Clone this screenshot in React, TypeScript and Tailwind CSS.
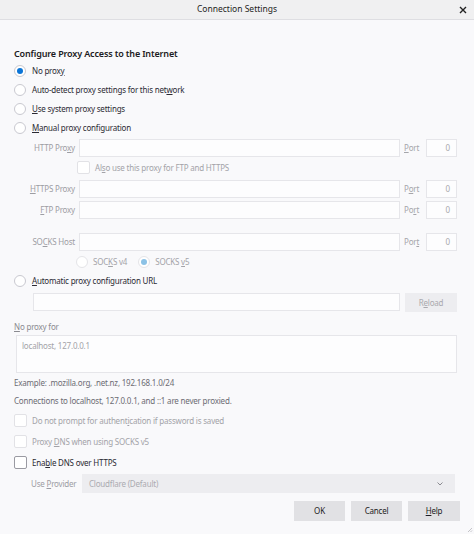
import type { ReactNode } from 'react';

const font = { fontFamily: '"Noto Sans", "Open Sans", sans-serif' };

function K({ children }: { children: ReactNode }) {
  return <span className="underline underline-offset-[1px]">{children}</span>;
}

function Radio({ checked = false, disabled = false }: { checked?: boolean; disabled?: boolean }) {
  return (
    <span
      className={`flex h-[12px] w-[12px] shrink-0 items-center justify-center rounded-full border bg-white ${
        disabled ? 'border-[#e4e4e8]' : 'border-[#c9c9d0]'
      }`}
    >
      {checked && (
        <span className={`h-[6px] w-[6px] rounded-full ${disabled ? 'bg-[#8cc2e6]' : 'bg-[#0a74d6]'}`} />
      )}
    </span>
  );
}

function Check({ disabled = false }: { disabled?: boolean }) {
  return (
    <span
      className={`h-[13px] w-[13px] shrink-0 rounded-[2px] border bg-white ${
        disabled ? 'border-[#e2e2e6]' : 'border-[#9a9aa2]'
      }`}
    />
  );
}

function Field({ className = '' }: { className?: string }) {
  return <div className={`h-[18px] border border-[#e6e6ea] bg-[#fdfdfe] ${className}`} />;
}

function ProxyRow({ label, port, mt }: { label: ReactNode; port: ReactNode; mt: string }) {
  return (
    <div className={`flex h-[18px] items-center ${mt}`}>
      <div className="w-[62px] pr-[1px] text-right text-[#9d9da3]">{label}</div>
      <Field className="ml-[3px] flex-1" />
      <div className="ml-[4px] w-[18px] text-[#a5a5aa]">{port}</div>
      <div className="ml-[4px] flex h-[18px] w-[31px] items-center justify-end border border-[#e6e6ea] bg-[#fdfdfe] pr-[6px] text-[#a8a8ad]">
        0
      </div>
    </div>
  );
}

export default function App() {
  return (
    <div
      className="relative flex h-[534px] w-[474px] flex-col bg-[#f9f9fb] text-[8px] leading-none tracking-[-0.2px] text-[#2b2a33]"
      style={font}
    >
      <div className="relative flex h-[20px] shrink-0 items-center justify-center border-b border-[#dedee2] bg-[#f0f0f1] text-[8.5px] tracking-normal text-[#1e1e22]">
        Connection Settings
        <svg className="absolute right-[7px] top-[6px]" width="8" height="8" viewBox="0 0 8 8">
          <path d="M1 1L7 7M7 1L1 7" stroke="#222" strokeWidth="1.4" />
        </svg>
      </div>

      <div className="flex flex-col pl-[14px] pr-[17px]">
        <div className="mt-[25px] flex h-[16px] items-center text-[9px] font-semibold tracking-[-0.15px] text-[#1c1b22]">
          Configure Proxy Access to the Internet
        </div>

        <div className="flex h-[19px] items-center gap-[6px]">
          <Radio checked />
          <span>
            No prox<K>y</K>
          </span>
        </div>
        <div className="flex h-[19px] items-center gap-[6px]">
          <Radio />
          <span>
            Auto-detect proxy settings for this net<K>w</K>ork
          </span>
        </div>
        <div className="flex h-[19px] items-center gap-[6px]">
          <Radio />
          <span>
            <K>U</K>se system proxy settings
          </span>
        </div>
        <div className="flex h-[20px] items-center gap-[6px]">
          <Radio />
          <span>
            <K>M</K>anual proxy configuration
          </span>
        </div>

        <ProxyRow
          mt="mt-[1px]"
          label={
            <>
              HTTP Pro<K>x</K>y
            </>
          }
          port={
            <>
              <K>P</K>ort
            </>
          }
        />
        <div className="flex h-[21px] items-center gap-[5px] pl-[63px] text-[#a3a3a8]">
          <Check disabled />
          <span>
            Al<K>s</K>o use this proxy for FTP and HTTPS
          </span>
        </div>
        <ProxyRow
          mt="mt-[2px]"
          label={
            <>
              <K>H</K>TTPS Proxy
            </>
          }
          port={
            <>
              P<K>o</K>rt
            </>
          }
        />
        <ProxyRow
          mt="mt-[3px]"
          label={
            <>
              <K>F</K>TP Proxy
            </>
          }
          port={
            <>
              Po<K>r</K>t
            </>
          }
        />
        <ProxyRow
          mt="mt-[14px]"
          label={
            <>
              SO<K>C</K>KS Host
            </>
          }
          port={
            <>
              Por<K>t</K>
            </>
          }
        />

        <div className="flex h-[21px] items-center pl-[62px] text-[#a3a3a8]">
          <Radio disabled />
          <span className="ml-[5px]">
            SOC<K>K</K>S v4
          </span>
          <span className="ml-[11px]">
            <Radio checked disabled />
          </span>
          <span className="ml-[5px]">
            SOCKS <K>v</K>5
          </span>
        </div>

        <div className="flex h-[18px] items-center gap-[6px]">
          <Radio />
          <span>
            <K>A</K>utomatic proxy configuration URL
          </span>
        </div>
        <div className="mt-[3px] flex items-start pl-[19px]">
          <Field className="flex-1" />
          <div className="ml-[5px] flex h-[19px] w-[52px] items-center justify-center bg-[#ededf0] text-[#a9a9ae]">
            R<K>e</K>load
          </div>
        </div>

        <div className="mt-[8px] flex h-[14px] items-center text-[#8a8a90]">
          <span>
            <K>N</K>o proxy for
          </span>
        </div>
        <div className="ml-[2px] mt-[1px] h-[38px] border border-[#e6e6ea] bg-[#fdfdfe] pl-[5px] pt-[6px] text-[#a3a3a8]">
          localhost, 127.0.0.1
        </div>

        <div className="mt-[3px] flex h-[14px] items-center text-[#6c6c73]">
          Example: .mozilla.org, .net.nz, 192.168.1.0/24
        </div>
        <div className="mt-[4px] flex h-[14px] items-center text-[#6c6c73]">
          Connections to localhost, 127.0.0.1, and ::1 are never proxied.
        </div>

        <div className="mt-[2px] flex h-[21px] items-center gap-[5px] text-[#a3a3a8]">
          <Check disabled />
          <span>
            Do not prompt for authent<K>i</K>cation if password is saved
          </span>
        </div>
        <div className="flex h-[21px] items-center gap-[5px] text-[#a3a3a8]">
          <Check disabled />
          <span>
            Proxy <K>D</K>NS when using SOCKS v5
          </span>
        </div>
        <div className="flex h-[21px] items-center gap-[5px]">
          <Check />
          <span>
            Ena<K>b</K>le DNS over HTTPS
          </span>
        </div>

        <div className="mt-[1px] flex h-[19px] items-center pl-[17px]">
          <span className="w-[51px] text-[#9d9da3]">
            Use <K>P</K>rovider
          </span>
          <div className="mr-[2px] flex h-[19px] flex-1 items-center justify-between bg-[#ededf0] pl-[7px] pr-[12px] text-[#ababb0]">
            <span>Cloudflare (Default)</span>
            <svg width="6" height="4" viewBox="0 0 6 4">
              <path d="M0.5 0.5L3 3L5.5 0.5" fill="none" stroke="#8a8a90" strokeWidth="1" />
            </svg>
          </div>
        </div>

        <div className="-mr-[3px] mt-[8px] flex justify-end gap-[6px] text-[#1c1b22]">
          <div className="flex h-[20px] w-[51px] items-center justify-center bg-[#e1e1e4]">OK</div>
          <div className="flex h-[20px] w-[51px] items-center justify-center bg-[#e1e1e4]">Cancel</div>
          <div className="flex h-[20px] w-[52px] items-center justify-center bg-[#e1e1e4]">
            <K>H</K>elp
          </div>
        </div>
      </div>

      <svg className="absolute bottom-[1px] right-[1px]" width="6" height="6" viewBox="0 0 6 6">
        <path d="M5 1L1 5M5 3.5L3.5 5" stroke="#c4c4c8" strokeWidth="1" />
      </svg>
    </div>
  );
}
